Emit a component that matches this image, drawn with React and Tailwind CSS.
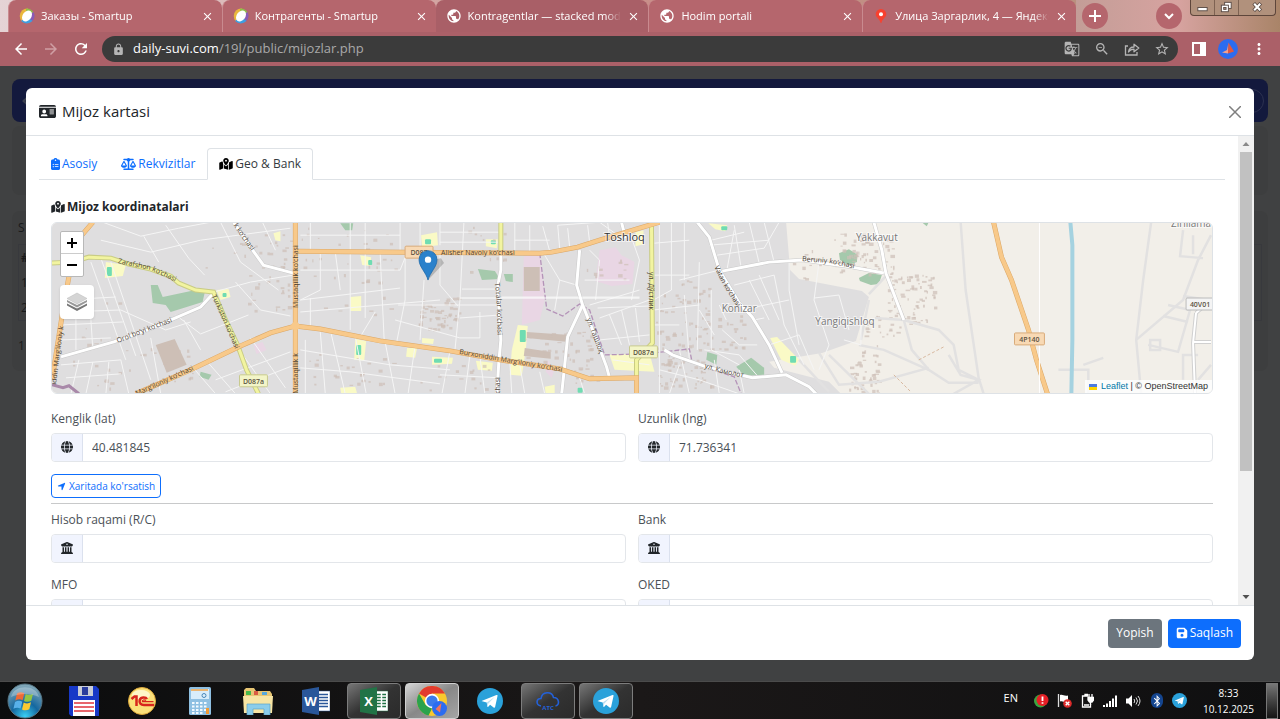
import { FaBluetoothB, FaBuildingColumns, FaClipboardList, FaFloppyDisk, FaGlobe, FaIdCard, FaLocationArrow, FaMapLocationDot, FaScaleBalanced } from 'react-icons/fa6'
import { MdArrowBack, MdArrowForward, MdClose, MdGTranslate, MdLock, MdMoreVert, MdPublic, MdRefresh, MdStarBorder, MdZoomOut } from 'react-icons/md'

const BROWSER_TABS = [
  { title: 'Заказы - Smartup', icon: 'smartup' },
  { title: 'Контрагенты - Smartup', icon: 'smartup' },
  { title: 'Kontragentlar — stacked moda', icon: 'globe', active: true },
  { title: 'Hodim portali', icon: 'globe' },
  { title: 'Улица Заргарлик, 4 — Яндекс', icon: 'pin' },
]

function Favicon({ type }) {
  if (type === 'globe') return <MdPublic className="size-4 shrink-0 text-white" />
  if (type === 'pin') {
    return (
      <svg viewBox="0 0 16 16" className="size-4 shrink-0">
        <path d="M8 1a5.3 5.3 0 0 0-5.3 5.3c0 3.4 4.2 4.400 4.900 8.700h.8c.7-4.300 4.900-5.300 4.900-8.700A5.300 5.300 0 0 0 8 1z" fill="#f8412f" />
        <circle cx="8" cy="6.300" r="2" fill="#fff" />
      </svg>
    )
  }
  return (
    <svg viewBox="0 0 16 16" className="size-4 shrink-0">
      <path d="M8 8 2.500 13A8 8 0 0 1 3 2.500 8 8 0 0 1 9 .5z" fill="#e9b73c" />
      <path d="M8 8 7 .6a8 8 0 0 1 7.500 4z" fill="#8dbf4b" />
      <path d="M8 8l6.500-4A8 8 0 0 1 13 13.500z" fill="#8a5bb5" />
      <path d="M8 8l5.500 5A8 8 0 0 1 2 13z" fill="#3f9ee0" />
      <ellipse cx="8" cy="8" rx="4.300" ry="6" fill="#fff" transform="rotate(38 8 8)" />
    </svg>
  )
}

function BrowserTab({ title, icon, active }) {
  return (
    <div
      className={`flex h-8 min-w-0 flex-1 items-center gap-[6px] rounded-t-lg pr-2 pl-[10px] ${
        active ? 'bg-[#a95f67]' : 'border-l border-[#c98a8f] bg-[#b5666d]'
      }`}
    >
      <Favicon type={icon} />
      <span className="min-w-0 flex-1 overflow-hidden mask-r-from-90% text-[11px] whitespace-nowrap text-white">{title}</span>
      <button aria-label="Yopish" className="text-white">
        <MdClose className="size-[13px]" />
      </button>
    </div>
  )
}

function TabStrip() {
  return (
    <div className="flex h-8 bg-linear-to-r from-[#e5d3d5] via-[#c98f8a] to-[#b29078] pl-2">
      <div className="flex w-[1068px] min-w-0">
        {BROWSER_TABS.map((tab) => (
          <BrowserTab key={tab.title} {...tab} />
        ))}
      </div>
      <div className="flex shrink-0 grow items-center justify-between bg-linear-to-r from-[#c39d97] via-[#d7a3a0] to-[#a98468] pl-[6px]">
        <button aria-label="Yangi" className="grid size-[26px] place-items-center rounded-full bg-[#b5666d] text-white">
          <svg viewBox="0 0 12 12" className="size-3" stroke="currentColor" strokeWidth="2">
            <path d="M6 0v12M0 6h12" />
          </svg>
        </button>
        <div className="flex items-center gap-2 self-stretch pr-1">
          <button aria-label="Qidirish" className="grid size-[26px] place-items-center rounded-full bg-[#b5666d] text-white">
            <svg viewBox="0 0 12 12" className="size-3" fill="none" stroke="currentColor" strokeWidth="2">
              <path d="M2 4l4 4 4-4" />
            </svg>
          </button>
          <div className="flex h-4 self-start rounded-b border border-t-0 border-[#5e463b] bg-[#b1917c] text-[#5b4c46]">
            <button aria-label="Kichraytirish" className="w-6 border-r border-[#7e6252]">
              <svg viewBox="0 0 24 16" className="h-full w-full">
                <rect x="7" y="8" width="10" height="3.500" fill="#fff" stroke="currentColor" />
              </svg>
            </button>
            <button aria-label="Oyna" className="w-6 border-r border-[#7e6252]">
              <svg viewBox="0 0 24 16" className="h-full w-full">
                <rect x="10" y="2.500" width="7" height="6.500" fill="#fff" stroke="currentColor" />
                <rect x="6.500" y="5.500" width="7.500" height="7" fill="#fff" stroke="currentColor" />
                <rect x="9" y="8" width="2.500" height="2" fill="#b1917c" stroke="currentColor" />
              </svg>
            </button>
            <button aria-label="Chiqish" className="w-9">
              <svg viewBox="0 0 36 16" className="h-full w-full">
                <path d="M14.500 3.500l7.500 8M22 3.500l-7.500 8" stroke="currentColor" strokeWidth="4" />
                <path d="M15 4l6.500 7M21.500 4L15 11" stroke="#fff" strokeWidth="2.200" />
              </svg>
            </button>
          </div>
        </div>
      </div>
    </div>
  )
}

function Toolbar() {
  return (
    <div className="flex h-[34px] items-center bg-[#ab6068] pr-3 pl-3 text-white">
      <button aria-label="Orqaga" className="mr-3"><MdArrowBack className="size-[18px]" /></button>
      <button aria-label="Oldinga" className="mr-3 text-[#cf9fa4]"><MdArrowForward className="size-[18px]" /></button>
      <button aria-label="Yangilash" className="mr-3"><MdRefresh className="size-[18px]" /></button>
      <div className="flex h-[26px] min-w-0 flex-1 items-center rounded-full bg-[#3b3b3b] pr-2 pl-[10px] text-[#b5b5b5]">
        <MdLock className="mr-2 size-[13px]" />
        <p className="flex-1 truncate text-[13px] text-[#a9a9a9]">
          <span className="text-white">daily-suvi.com</span>/19l/public/mijozlar.php
        </p>
        <div className="flex items-center gap-[14px]">
          <MdGTranslate className="size-4" />
          <MdZoomOut className="size-4" />
          <svg viewBox="0 0 16 16" className="size-4" fill="none" stroke="currentColor" strokeWidth="1.300">
            <path d="M4 5H1.500v9H13v-3" />
            <path d="M4.500 11c.4-3.200 2-5 5.500-5V3.200L14.800 7 10 10.800V8.200c-2.500 0-4.200.8-5.500 2.800z" strokeLinejoin="round" />
          </svg>
          <MdStarBorder className="size-4" />
        </div>
      </div>
      <div className="ml-[14px] flex items-center gap-3">
        <svg viewBox="0 0 14 14" className="size-[14px]">
          <path d="M0 0h14v14H0zM2 2v10h6V2z" fill="#fff" fillRule="evenodd" />
        </svg>
        <svg viewBox="0 0 20 20" className="size-5">
          <circle cx="10" cy="10" r="10" fill="#2c6cf0" />
          <path d="M10.500 3.500 9 11l-5 2.500 6 1z" fill="#f4a08d" />
          <path d="M10.500 3.500 10 14.500l6-2z" fill="#e4573f" />
        </svg>
        <MdMoreVert className="size-[18px]" />
      </div>
    </div>
  )
}

// Underlying page, only its edges stay visible round the dialog.
function DimmedPage() {
  return (
    <div className="h-full bg-[#404142] px-3 pt-[13px] text-[12px] text-[#191a1b]">
      <div className="flex h-[43px] items-center justify-between rounded-lg bg-[#13193d] pr-1 pl-3">
        <span className="size-2 rotate-45 border-b-2 border-l-2 border-[#3b3f4f]" />
        <span className="h-6 w-16 rounded-full border border-[#2c3150]" />
      </div>
      <div className="mt-1 h-[69px] rounded-lg bg-[#3d3e3f]" />
      <div className="mt-4 flex h-[160px] flex-col items-start rounded-lg bg-[#3d3e3f] px-[6px] leading-[25px]">
        <p className="mt-1">S</p>
        <div className="mt-1 self-stretch border border-[#38393d] px-[2px]">
          <p className="w-fit font-bold">#</p>
          <p className="w-fit">1</p>
          <p className="w-fit">2</p>
        </div>
        <p className="mt-3">1</p>
      </div>
    </div>
  )
}

const MAIN_ROADS = [
  'M295 222V394',
  'M295 251L405 252 540 253 552 252 578 247 600 240 640 228 660 222',
  'M135 394L190 370 240 346 270 333 295 326 320 329 380 341 450 351 500 360 560 369 590 379 637 378V394',
  'M92 222L80 236 70 265 62 310 55 355 51 380',
  'M995 222L1003 257 1013 280 1030 330 1038 360 1049 394',
]

const YELLOW_ROADS = [
  'M51 263L70 262 88 257 110 258 128 264 150 269 170 276 178 283 195 290 213 292 225 320 237 345 246 370 258 394',
  'M652 222L653 343 637 360V378',
  'M501 222V252',
]

const WHITE_ROADS = [
  'M501 252V270L498 285 501 340 499 362 497 394',
  'M580 250L577 285 583 305 568 337 562 394',
  'M583 305L595 335 607 367 610 378',
  'M698 222L710 237 720 270 740 303 753 317 770 345 783 373',
  'M723 271L770 262 803 260 853 267 885 273',
  'M875 222L883 250 887 273 905 320',
  'M665 350L673 355 707 367 753 378 787 375 810 387 817 394',
  'M213 293L200 307 147 330 113 342 60 357',
  'M233 222L250 247 263 265 293 273',
  'M622 222L626 238',
]

const STREETS = [
  'M102 222L140 236 178 228 210 222M100 240L150 252 200 240 290 228M143 236L158 262M165 225L188 258 204 275',
  'M90 262L125 360M100 258L135 356M110 262L150 380M60 300L115 297M62 312L120 310M60 325L122 322M60 340L110 338M75 300V350M88 290L92 350',
  'M60 365L120 360 128 394M65 378L120 374M70 394L78 360M85 394L92 362M105 394L108 362M120 310L165 330 190 322',
  'M150 338L160 394M183 320L200 350M190 365L215 394M205 360L235 394M235 345L270 394M250 338L285 388M215 380L290 352M225 392L292 366',
  'M213 292L250 282 293 275M235 282L260 310 290 316M175 315L200 334 248 315M220 222L240 262 278 290M262 222L275 250M300 235H400M310 222V250',
  'M300 270H400L406 255M320 252V290L300 300M335 252L340 290M350 222V330M365 222V318M380 253L384 340M300 300L400 288M300 312L440 300M310 298V326',
  'M405 255V300L396 345M440 255V285L458 306M424 280L420 340M464 222L460 300 455 350M400 222V252M420 222V252M440 232H500M440 242H498M440 222V245',
  'M398 305H498M460 318L500 315M395 320L460 338H480V312M375 312L360 337M330 330L345 394M355 336L366 394M385 342L395 394M415 346L408 394M450 351L442 394',
  'M300 350L390 365 450 370M300 368L350 372 440 384M305 340V394M320 332L325 394M470 355L465 394M480 357L485 394M440 375L500 378M510 362L512 394',
  'M515 253V222M530 253V225M550 251L543 226M515 240H550M560 248L558 225 600 222M570 247L568 228M590 242L588 225M610 236L608 222M462 289H498M502 297H640',
  'M590 250L600 260 596 300M585 280H630M600 222L625 240M630 232L640 260 632 300M545 255L560 280 555 310M560 280L577 285M590 305L640 290M600 318L650 300',
  'M598 308L650 306M610 315L622 345M622 310L630 345M636 308L640 342M600 340L650 335M613 360L650 365M540 372L545 394M520 365L525 394M580 378L585 394',
  'M660 225V394M672 222V290L654 300M685 222V280M655 275H690M655 243L690 240M680 280L720 270M685 295L690 360M700 262L698 350M654 310L700 305M712 290V350L740 365',
  'M712 240L745 232M718 255L765 248 780 222M735 225L742 268M750 222L760 263M765 222L775 262M710 245L770 240M728 268L735 230M723 330L740 345 758 345',
  'M735 285L775 275 785 325 805 365M750 280L770 320M760 275L780 320M742 310L790 300M755 320L765 318M770 345L800 335 815 370M790 262V290L800 345',
  'M820 262L815 300 830 345 820 370M815 298L840 295 850 330M840 320H862V345L845 340M700 310L715 335M680 350L690 394M715 360L720 394M740 370L745 394',
  'M660 370L700 380 740 394M670 394L680 365M705 350L740 355 760 378M727 320L720 305M655 325H680',
]

const RURAL_TRACKS = [
  'M962 222L967 290 980 378 985 394M950 355L962 375 980 380 955 394M905 320L940 330 955 345 960 370 980 380M905 320L913 350 930 370 950 383H980',
  'M1153 222L1145 280 1138 340 1143 394M1138 340L1185 300 1200 260 1213 235M1185 230L1182 256 1205 258M1195 235V254M1165 316L1190 322M1150 345L1180 352 1192 310 1170 305',
  'M1185 380V355H1200M1200 380L1213 365M1060 370H1090V394M1085 365L1105 358M1210 300L1185 296M1152 340H1162V350H1152z',
  'M860 345L885 350 930 370M870 300L862 340M820 353L840 385 880 382 930 368M830 355L870 394M870 294L888 275M800 360L830 392M876 318L905 320',
]

const PARKS = [
  '150,285 157,285 162,297 195,290 204,293 202,302 170,312 165,305 152,303',
  '340,223 353,223 352,230 345,230',
  '478,269 495,271 500,279 482,280',
  '504,274 513,274 513,282 506,281',
  '840,253 850,249 858,254 858,262 850,265 841,260',
  '860,278 870,273 883,275 880,284 872,285 861,281',
  '737,367 752,358 765,368 765,375 745,376',
  '708,352 718,355 717,365 707,360',
  '200,372 211,375 208,380 199,377',
  '923,222 930,222 928,226',
]

const YELLOW_AREAS = [
  '105,262 125,265 122,276 104,278',
  '216,290 228,289 230,297 220,300',
  '421,235 437,232 438,245 422,247',
  '486,239 498,239 497,248 486,246',
  '360,255 371,257 370,266 362,265',
  '350,297 361,296 361,311 350,311',
  '355,339 366,341 364,361 354,360',
  '407,348 417,348 415,358 406,357',
  '432,357 453,358 452,364 432,365',
  '476,361 493,363 492,371 478,370',
  '518,325 528,326 526,350 522,376 510,375 512,350',
  '422,338 434,339 433,344 422,343',
  '610,355 650,353 655,372 615,370',
  '771,338 778,337 800,360 796,366 782,360',
  '636,232 644,230 644,244 636,246',
  '709,223 728,225 726,231 716,229',
  '340,388 355,387 357,394 341,394',
  '545,387 555,385 555,394 546,394',
  '273,233 280,231 280,241 275,240',
]

const PITCHES = [
  [106, 267, 5, 9], [425, 239, 6, 5], [491, 240, 5, 4], [368, 260, 4, 5], [356, 345, 5, 10], [434, 359, 8, 4],
  [520, 330, 6, 12], [791, 356, 6, 7], [722, 226, 6, 4], [222, 293, 4, 4], [578, 388, 5, 5],
]

// [x, y, w, h, count] clusters of small houses
const HOUSE_CLUSTERS = [
  [205, 232, 85, 38, 26], [245, 275, 48, 36, 20], [60, 300, 60, 90, 24], [125, 345, 70, 40, 18],
  [300, 256, 95, 60, 26], [305, 352, 90, 38, 24], [418, 297, 42, 32, 60], [465, 225, 40, 50, 14],
  [300, 225, 95, 24, 12], [525, 332, 45, 30, 24], [570, 330, 28, 55, 26], [585, 255, 40, 35, 12],
  [655, 280, 55, 70, 60], [657, 355, 55, 36, 50], [700, 310, 50, 40, 26], [835, 232, 60, 42, 66],
  [888, 272, 48, 52, 80], [850, 345, 30, 48, 46], [790, 245, 30, 35, 12], [865, 315, 40, 22, 20], [400, 365, 90, 26, 16],
]

// Small deterministic generator so the houses stay put between renders.
function makeHouses() {
  let seed = 7
  const next = () => {
    seed = (seed * 16807) % 2147483647
    return seed / 2147483647
  }
  return HOUSE_CLUSTERS.flatMap(([x, y, w, h, count]) =>
    Array.from({ length: count }, () => [x + next() * w, y + next() * h, 1.2 + next() * 3.500, 1 + next() * 2.500]),
  )
}

const HOUSES = makeHouses()

const STREET_LABELS = [
  { id: 'zarafshon', d: 'M117 263L150 270 186 287', text: 'Zarafshon ko‘chasi' },
  { id: 'turkiston', d: 'M211 296L223 322 240 362', text: 'Turkiston ko‘chasi' },
  { id: 'orol', d: 'M117 343L145 332 185 317', text: 'Orol bo‘yi ko‘chasi' },
  { id: 'margilon', d: 'M136 396L165 383 206 364', text: 'Marg‘iloniy ko‘chasi' },
  { id: 'margilon2', d: 'M55 385L60 345 66 305', text: 'iddin Marg‘iloniy k' },
  { id: 'mustaqil', d: 'M298 308V238', text: 'Mustaqillik ko‘chasi' },
  { id: 'mustaqil2', d: 'M298 394V340', text: 'Mustaqillik k' },
  { id: 'navoiy', d: 'M441 255H530', text: 'Alisher Navoiy ko‘chasi' },
  { id: 'burxon', d: 'M459 354L510 363 575 374', text: 'Burxoniddin Marg‘iloniy ko‘chasi' },
  { id: 'toralar', d: 'M495 283L497 303 498 345', text: 'To‘ralar ko‘chasi' },
  { id: 'toralar2', d: 'M500 394V370', text: 'chasi' },
  { id: 'tashloq', d: 'M587 319L594 338 605 368', text: 'ул. Ташлоқ' },
  { id: 'dustlik', d: 'M650 272V315', text: 'ул. Дўстлик' },
  { id: 'vatan', d: 'M715 267L723 284 745 318', text: 'Vatan ko‘chasi' },
  { id: 'kamolot', d: 'M705 368L722 373 755 380', text: 'ул. Камолот' },
  { id: 'beruniy', d: 'M803 261L830 263 868 271', text: 'Beruniy ko‘chasi' },
  { id: 'other', d: 'M233 225L241 237 258 261', text: 'k ko‘chasi' },
]

const PLACES = [
  { x: 625, y: 241, name: 'Toshloq', className: 'fill-[#333] text-[11px]' },
  { x: 878, y: 241, name: 'Yakkavut', className: 'fill-[#777] text-[10px]' },
  { x: 740, y: 312, name: 'Konizar', className: 'fill-[#777] text-[10px]' },
  { x: 846, y: 325, name: 'Yangiqishloq', className: 'fill-[#777] text-[10px]' },
  { x: 1193, y: 227, name: 'Zirillama', className: 'fill-[#777] text-[10px]' },
]

const SHIELDS = [
  { x: 239, y: 375, w: 28, text: 'D087a', fill: '#f3f5c8', stroke: '#c8ca8f' },
  { x: 405, y: 246, w: 28, text: 'D087', fill: '#f8d9b4', stroke: '#d9ab79' },
  { x: 630, y: 346, w: 28, text: 'D087a', fill: '#f3f5c8', stroke: '#c8ca8f' },
  { x: 1016, y: 333, w: 30, text: '4P140', fill: '#f8d9b4', stroke: '#d9ab79' },
  { x: 1188, y: 298, w: 28, text: '40V01', fill: '#f4f4f4', stroke: '#bbb' },
]

function MapTiles() {
  return (
    <svg viewBox="51 222 1163 172" preserveAspectRatio="xMidYMid slice" className="block h-full w-full" fill="none">
      <rect x="51" y="222" width="1163" height="172" fill="#f2efe9" />
      <path d="M51 222H787L791 270 800 279 863 291 870 297 857 341 823 353 770 362 775 368 830 382 842 394H51z" fill="#dfdedf" />
      <path d="M524 256L540 254 545 300 540 320 522 325zM600 250L616 247 622 255 635 262 633 284 612 286 596 281z" fill="#e9d6e4" />
      <path d="M253 345L262 342 266 350 256 354zM548 360L554 372 552 378 546 372z" fill="#e9d6e4" />
      {PARKS.map((p) => <polygon key={p} points={p} fill="#a5c9ac" />)}
      {YELLOW_AREAS.map((p) => <polygon key={p} points={p} fill="#fafac6" />)}
      {PITCHES.map(([x, y, w, h]) => <rect key={`${x}-${y}`} x={x} y={y} width={w} height={h} rx="1" fill="#6fdcb2" />)}
      <g fill="#cdbfb6">
        <path d="M155 345L174 339 186 365 166 373z" />
        <path d="M524 267H540V291H524zM525 348L551 352V359L524 356zM527 332L570 335 569 342 527 338z" />
        {HOUSES.map(([x, y, w, h]) => <rect key={`${x}-${y}`} x={x} y={y} width={w} height={h} opacity="0.7" />)}
      </g>
      <g stroke="#e2e1e1" strokeWidth="2.500">{RURAL_TRACKS.map((d) => <path key={d} d={d} />)}</g>
      <g stroke="#f5f5f5" strokeWidth="1">{STREETS.map((d) => <path key={d} d={d} />)}</g>
      <path d="M540 253L547 309 563 316 580 304 590 310 605 355 645 354 690 349 693 363 735 377 742 394" stroke="#b493b8" strokeWidth="1.300" strokeDasharray="5 2" />
      <path d="M51 385L62 388 68 386 78 394" stroke="#a989a9" strokeWidth="3" />
      <path d="M920 360L945 347M895 375L912 392" stroke="#d8b9a0" strokeDasharray="3 2" />
      <g stroke="#c9c9c9" strokeWidth="4">{WHITE_ROADS.map((d) => <path key={d} d={d} />)}</g>
      <g stroke="#fff" strokeWidth="3">{WHITE_ROADS.map((d) => <path key={d} d={d} />)}</g>
      <path d="M1198 313L1195 343 1197 394M1198 313L1213 300M1196 342H1213" stroke="#d0d0d0" strokeWidth="4" />
      <path d="M1198 313L1195 343 1197 394M1198 313L1213 300M1196 342H1213" stroke="#fff" strokeWidth="2" />
      <path d="M1072 222L1074 245V340L1073 394" stroke="#a5d2e0" strokeWidth="4" />
      <g stroke="#c9cc84" strokeWidth="5">{YELLOW_ROADS.map((d) => <path key={d} d={d} />)}</g>
      <g stroke="#f2f4a0" strokeWidth="3">{YELLOW_ROADS.map((d) => <path key={d} d={d} />)}</g>
      <g stroke="#dba766" strokeWidth="5">{MAIN_ROADS.map((d) => <path key={d} d={d} />)}</g>
      <g stroke="#f8c98a" strokeWidth="4">{MAIN_ROADS.map((d) => <path key={d} d={d} />)}</g>
      <circle cx="295" cy="326" r="4" fill="#f8c98a" />
      <path d="M460 298H640M1041 222V394" stroke="#fff" />
      {STREET_LABELS.map(({ id, d, text }) => (
        <g key={id}>
          <path id={id} d={d} />
          <text className="fill-[#4d4335] text-[7px]"><textPath href={`#${id}`}>{text}</textPath></text>
        </g>
      ))}
      {SHIELDS.map(({ x, y, w, text, fill, stroke }) => (
        <g key={`${text}-${x}`}>
          <rect x={x} y={y} width={w} height="12" rx="1" fill={fill} stroke={stroke} />
          <text x={x + w / 2} y={y + 9} textAnchor="middle" className="fill-[#5c5342] text-[7px] font-semibold">{text}</text>
        </g>
      ))}
      {PLACES.map(({ x, y, name, className }) => (
        <text key={name} x={x} y={y} textAnchor="middle" stroke="#fff" strokeOpacity="0.6" strokeWidth="2" paintOrder="stroke" className={className}>
          {name}
        </text>
      ))}
      <path d="M429 279L444 263 441 258 432 260z" fill="#555" opacity="0.3" />
      <path d="M428 280C426 272 419 267 419 259.500a9 9 0 0 1 18 0C437 267 430 272 428 280z" fill="#2a81cb" stroke="#1f6aa9" strokeWidth="0.800" />
      <circle cx="428" cy="259.500" r="3.200" fill="#fff" />
    </svg>
  )
}

function LocationMap() {
  return (
    <div className="relative h-[172px] overflow-hidden rounded-md border border-[#dee2e6]">
      <MapTiles />
      <div className="absolute top-2 left-2 flex flex-col gap-2">
        <div className="w-6 rounded-xs border border-[#b8b8b8] bg-white text-black">
          <button aria-label="Zoom in" className="grid h-[22px] w-full place-items-center border-b border-[#ccc]">
            <svg viewBox="0 0 10 10" className="size-[10px]" stroke="currentColor" strokeWidth="2"><path d="M5 0v10M0 5h10" /></svg>
          </button>
          <button aria-label="Zoom out" className="grid h-[22px] w-full place-items-center">
            <svg viewBox="0 0 10 10" className="size-[10px]" stroke="currentColor" strokeWidth="2"><path d="M0 5h10" /></svg>
          </button>
        </div>
        <button aria-label="Layers" className="grid size-[34px] place-items-center rounded bg-white shadow">
          <svg viewBox="0 0 22 20" className="h-5 w-[22px]">
            <path d="M11 19L1 13.500v-2l10 5 10-5v2z" fill="#777" />
            <path d="M11 15.500L1 10v-2l10 5 10-5v2z" fill="#999" />
            <path d="M11 1l10 5.500L11 12 1 6.500z" fill="#d5d5d5" stroke="#bbb" strokeWidth="0.500" />
          </svg>
        </button>
      </div>
      <div className="absolute right-0 bottom-0 flex items-center gap-1 bg-white/80 px-1 font-[Liberation_Sans] text-[9px] leading-[13px] text-[#333]">
        <svg viewBox="0 0 8 6" className="h-[6px] w-2">
          <path d="M0 0h8v3H0z" fill="#4c7be1" />
          <path d="M0 3h8v3H0z" fill="#ffd500" />
        </svg>
        <span><a href="#leaflet" className="text-[#0078a8]">Leaflet</a> | © OpenStreetMap</span>
      </div>
    </div>
  )
}

function Field({ id, label, icon: Icon, value = '' }) {
  return (
    <div>
      <label htmlFor={id} className="block w-fit text-[12px] leading-5 text-[#4b5157]">{label}</label>
      <div className="mt-1 flex h-[29px] overflow-hidden rounded border border-[#e3e6ea]">
        <span className="grid w-[31px] place-items-center border-r border-[#dbe1ee] bg-[#f1f4fe] text-[#212529]">
          <Icon className="mb-[2px] size-3" />
        </span>
        <input id={id} defaultValue={value} className="min-w-0 flex-1 px-[9px] text-[12px] text-[#495057] outline-none" />
      </div>
    </div>
  )
}

const CARD_TABS = [
  { label: 'Asosiy', icon: FaClipboardList, iconClass: 'h-3 w-[9px]' },
  { label: 'Rekvizitlar', icon: FaScaleBalanced, iconClass: 'h-3 w-[15px]' },
  { label: 'Geo & Bank', icon: FaMapLocationDot, iconClass: 'h-3 w-[14px] text-black', active: true },
]

function CardTabs() {
  return (
    <div className="flex border-b border-[#dee2e6]">
      {CARD_TABS.map(({ label, icon: Icon, iconClass, active }) => (
        <button
          key={label}
          className={`-mb-px flex h-8 items-center gap-[2px] rounded-t border px-[11px] text-[12px] ${
            active ? 'border-[#dee2e6] border-b-white bg-white text-[#343a40]' : 'border-transparent text-[#0d6efd]'
          }`}
        >
          <Icon className={iconClass} />
          {label}
        </button>
      ))}
    </div>
  )
}

function Scrollbar() {
  return (
    <div className="flex w-4 shrink-0 flex-col items-center bg-[#f1f1f1]">
      <svg viewBox="0 0 16 16" className="size-4 shrink-0"><path d="M4.500 10h7L8 6z" fill="#8a8a8a" /></svg>
      <div className="h-[68%] w-3 bg-[#c1c1c1]" />
      <svg viewBox="0 0 16 16" className="mt-auto size-4 shrink-0"><path d="M4.500 6h7L8 10z" fill="#505050" /></svg>
    </div>
  )
}

function ClientModal() {
  return (
    <section role="dialog" aria-label="Mijoz kartasi" className="flex h-full flex-col overflow-hidden rounded-md bg-white">
      <header className="flex h-12 shrink-0 items-center border-b border-[#dee2e6] px-[13px] text-[#212529]">
        <FaIdCard className="mr-[6px] size-[17px]" />
        <h1 className="flex-1 text-[15px]">Mijoz kartasi</h1>
        <button aria-label="Yopish" className="text-[#7f7f7f]">
          <svg viewBox="0 0 12 12" className="size-3" stroke="currentColor" strokeWidth="1.500"><path d="M0 0l12 12M12 0L0 12" /></svg>
        </button>
      </header>
      <div className="flex min-h-0 flex-1">
        <div className="min-w-0 flex-1 overflow-hidden px-[13px] pt-3">
          <CardTabs />
          <div className="px-3 pt-4">
            <h2 className="flex items-center gap-[2px] pb-1 text-[12px] leading-[22px] font-bold text-[#212529]">
              <FaMapLocationDot className="h-3 w-[14px]" />
              Mijoz koordinatalari
            </h2>
            <LocationMap />
            <div className="mt-[15px] grid grid-cols-2 gap-x-3">
              <Field id="lat" label="Kenglik (lat)" icon={FaGlobe} value="40.481845" />
              <Field id="lng" label="Uzunlik (lng)" icon={FaGlobe} value="71.736341" />
            </div>
            <button className="mt-3 flex h-6 items-center gap-[3px] rounded-sm border border-[#0d6efd] px-[5px] text-[10px] text-[#0d6efd]">
              <FaLocationArrow className="size-[9px]" />
              Xaritada ko'rsatish
            </button>
            <hr className="mt-[5px] border-[#c8c9ca]" />
            <div className="mt-[6px] grid grid-cols-2 gap-x-3 gap-y-3">
              <Field id="account" label="Hisob raqami (R/C)" icon={FaBuildingColumns} />
              <Field id="bank" label="Bank" icon={FaBuildingColumns} />
              <Field id="mfo" label="MFO" icon={FaBuildingColumns} />
              <Field id="oked" label="OKED" icon={FaBuildingColumns} />
            </div>
          </div>
        </div>
        <Scrollbar />
      </div>
      <footer className="flex h-[55px] shrink-0 items-center justify-end gap-[6px] border-t border-[#dee2e6] px-[13px] text-[12px] text-white">
        <button className="h-[29px] rounded bg-[#6c757d] px-2">Yopish</button>
        <button className="flex h-[29px] items-center gap-[2px] rounded bg-[#0d6efd] px-2">
          <FaFloppyDisk className="size-3" />
          Saqlash
        </button>
      </footer>
    </section>
  )
}

function TelegramIcon({ className }) {
  return (
    <svg viewBox="0 0 28 28" className={className}>
      <circle cx="14" cy="14" r="14" fill="#2aa1da" />
      <path d="M5.500 13.800L21 7.500c.8-.3 1.300.2 1.100 1.100l-2.600 11.800c-.2.900-.9 1.100-1.600.6l-3.800-2.900-2 2c-.4.400-.8.300-.9-.3l-.7-4.200-4.900-1.300c-.6-.1-.6-.3-.1-.5z" fill="#fff" />
      <path d="M10.500 15.600l8.500-5.800-6.800 7-.9 3.400z" fill="#bcdff2" />
    </svg>
  )
}

function StartOrb() {
  return (
    <svg viewBox="0 0 36 36" className="size-9">
      <defs>
        <radialGradient id="orb" cx="0.5" cy="0.95" r="0.9">
          <stop offset="0" stopColor="#39d0f5" />
          <stop offset="0.45" stopColor="#14679f" />
          <stop offset="1" stopColor="#7fa6b8" />
        </radialGradient>
      </defs>
      <circle cx="18" cy="18" r="17" fill="url(#orb)" stroke="#587887" />
      <path d="M10 10.500c2.500-1.700 5-1.600 7.300-.3l-1.700 7c-2.300-1.200-4.700-1.200-7.300.3z" fill="#ee6a35" />
      <path d="M18.700 11c2.400 1.200 4.800 1.200 7.300-.3l-1.700 7c-2.500 1.400-5 1.400-7.300.2z" fill="#93c544" />
      <path d="M8 19c2.600-1.500 5-1.500 7.300-.3l-1.700 6.800c-2.300-1.200-4.700-1.200-7.200.3z" fill="#58b1ea" />
      <path d="M16.700 19.500c2.300 1.200 4.700 1.200 7.300-.2l-1.700 6.900c-2.500 1.500-4.900 1.500-7.300.2z" fill="#fbc931" />
      <path d="M4 14C7 1 29 1 32 14c-9-4-19-4-28 0z" fill="#fff" opacity="0.28" />
    </svg>
  )
}

function FloppyIcon() {
  return (
    <svg viewBox="0 0 30 30" className="size-[30px]">
      <path d="M0 0h27l3 3v27H2l-2-2z" fill="#1738c7" />
      <path d="M9 0h15v10H9z" fill="#c8ccd6" /><path d="M13 1h6v8h-6z" fill="#2a3c9c" />
      <path d="M4 14h22v16H4z" fill="#fff" />
      <path d="M5 17h20M5 21h20M5 25h20" stroke="#e0343c" strokeWidth="1.500" />
    </svg>
  )
}

function OneCIcon() {
  return (
    <svg viewBox="0 0 28 28" className="size-7">
      <circle cx="14" cy="14" r="13.500" fill="#fbe07a" stroke="#dca73a" />
      <ellipse cx="13" cy="8" rx="9" ry="5" fill="#fff6c8" />
      <path d="M3.500 12l3-2.500h2V19" stroke="#d8251d" strokeWidth="2.500" fill="none" />
      <path d="M19 12c-1-2-6-2.500-7.200.8C10.800 16 13 18 16 18h10" stroke="#d8251d" strokeWidth="2.500" fill="none" />
      <path d="M18 13.500c-2-1.500-4-.3-3.500 1.200h11" stroke="#d8251d" strokeWidth="1.300" fill="none" />
    </svg>
  )
}

function CalculatorIcon() {
  return (
    <svg viewBox="0 0 22 28" className="h-7 w-[22px]">
      <rect width="22" height="28" rx="1.500" fill="#8fc0e2" />
      <rect x="2" y="2" width="18" height="10" fill="#d9edfa" />
      <path d="M2 3h17" stroke="#f1a245" strokeWidth="1.500" />
      <circle cx="15" cy="8.500" r="2" fill="none" stroke="#4887b9" />
      <path d="M3 16h16M3 19.500h16M3 23h16M3 26h12" stroke="#f3faff" strokeWidth="2.200" strokeDasharray="2.500 1.500" />
      <rect x="17" y="21" width="3" height="6" fill="#f29b35" />
    </svg>
  )
}

function ExplorerIcon() {
  return (
    <svg viewBox="0 0 30 28" className="h-7 w-[30px]">
      <path d="M1 3l2-2h8l2 3h14l2 3v19H1z" fill="#e7c674" />
      <path d="M3 4h5v4H3z" fill="#48b84c" /><path d="M11 4h4v4h-4z" fill="#d95c43" /><path d="M19 5h5v3h-5z" fill="#56a8dc" />
      <path d="M0 9h30l-1 17H1z" fill="#f7e5a4" />
      <path d="M4 28V17h23v11h-6v-6H10v6z" fill="#8bcdeb" stroke="#5ba3c7" strokeWidth="0.700" />
    </svg>
  )
}

function OfficeIcon({ letter, color, grid }) {
  return (
    <svg viewBox="0 0 28 28" className="size-7">
      <path d="M14 4h14v20H14z" fill="#fff" stroke={color} strokeWidth="0.500" />
      <path d="M17 7.500h9M17 10.500h9M17 13.500h9M17 16.500h9M17 19.500h9" stroke={color} strokeWidth="1.300" />
      {grid && <path d="M21.500 5v18" stroke="#fff" strokeWidth="1.500" />}
      <path d="M0 3L17 0v28L0 25z" fill={color} />
      <text x="8.500" y="18.500" textAnchor="middle" className="fill-white text-[13px] font-bold">{letter}</text>
    </svg>
  )
}

function ChromeIcon() {
  return (
    <svg viewBox="0 0 30 30" className="size-[30px]">
      <circle cx="15" cy="15" r="15" fill="#f9c92e" />
      <path d="M15 15L2 7.500A15 15 0 0 1 28 7.500H15z" fill="#e33b2e" />
      <path d="M2 7.500l6.500 11.300L15 22.500 11.500 29.600A15 15 0 0 1 2 7.500z" fill="#2ba24c" />
      <circle cx="15" cy="15" r="7.200" fill="#fff" />
      <circle cx="15" cy="15" r="5.600" fill="#3c7bea" />
      <circle cx="22.500" cy="22.500" r="7.500" fill="#2c6cf0" />
      <path d="M24.500 17l-6 6 4.500 3.500z" fill="#f0745c" />
    </svg>
  )
}

function AtcIcon() {
  return (
    <svg viewBox="0 0 24 20" className="h-5 w-6" fill="none" stroke="#2461d8" strokeWidth="1.600">
      <path d="M5 15C-.5 14 0 7.500 5 7.500 6 0 16 0 17.500 6.500c6 0 6.500 8 2 8.500" />
      <text x="12" y="18.500" textAnchor="middle" className="fill-[#2461d8] stroke-none text-[6px] font-bold">ATC</text>
    </svg>
  )
}

const TASKBAR_ITEMS = [
  { name: 'Total Commander', icon: <FloppyIcon /> },
  { name: '1C', icon: <OneCIcon /> },
  { name: 'Calculator', icon: <CalculatorIcon /> },
  { name: 'Explorer', icon: <ExplorerIcon /> },
  { name: 'Word', icon: <OfficeIcon letter="W" color="#2a579a" /> },
  { name: 'Excel', icon: <OfficeIcon letter="X" color="#217346" grid />, state: 'open' },
  { name: 'Chrome', icon: <ChromeIcon />, state: 'focused' },
  { name: 'Telegram', icon: <TelegramIcon className="size-[26px]" /> },
  { name: 'ATC', icon: <AtcIcon />, state: 'open' },
  { name: 'Telegram 2', icon: <TelegramIcon className="size-[26px]" />, state: 'open' },
]

const ITEM_STATES = {
  open: 'border-[#7d7d7d] bg-linear-to-br from-[#777] via-[#333] to-[#2b2b2b]',
  focused: 'border-[#d0d0d0] bg-linear-to-br from-[#d5d5d5] via-[#888] to-[#a5a5a5]',
}

function Tray() {
  return (
    <div className="flex items-center text-white">
      <span className="mr-3 mb-1 text-[11px]">EN</span>
      <div className="grid auto-cols-[23px] grid-flow-col place-items-center">
        <svg viewBox="0 0 15 15" className="size-[15px]">
          <circle cx="6.500" cy="8" r="6.500" fill="#3aa540" />
          <circle cx="8.500" cy="7" r="6" fill="#e51e25" />
          <path d="M8.500 3.500v4.500M8.500 9.200v1.600" stroke="#fff" strokeWidth="1.800" />
        </svg>
        <svg viewBox="0 0 15 15" className="size-[15px]">
          <path d="M1.500 1v13" stroke="#ddd" strokeWidth="1.300" />
          <path d="M3 2c3-1 4 1.500 8 .5V9c-4 1-5-1.500-8-.5z" fill="#fff" />
          <circle cx="10.500" cy="10.500" r="4.300" fill="#dd2b2b" />
          <path d="M8.700 8.700l3.600 3.600M12.300 8.700l-3.600 3.600" stroke="#fff" strokeWidth="1.400" />
        </svg>
        <svg viewBox="0 0 13 15" className="h-[15px] w-[13px]" fill="none" stroke="#fff" strokeWidth="1.300">
          <path d="M7 3H1.500v11h8V11M4 3V1.500h3M3 12h5" />
          <path d="M8 1v3M11 1v3M9.500 9v3" />
          <path d="M7 4.500h5.500V7L11 9H8.500L7 7z" fill="#fff" />
        </svg>
        <svg viewBox="0 0 15 12" className="h-3 w-[15px]" fill="#fff">
          <path d="M0 10h2v2H0zM3 8.500h2V12H3zM6 6h2v6H6zM9 3.500h2V12H9zM12 .5h2V12h-2z" />
        </svg>
        <svg viewBox="0 0 15 14" className="h-[14px] w-[15px]" fill="none" stroke="#ddd">
          <path d="M0 4.500h2.500L6 1v12L2.500 9.500H0z" fill="#fff" stroke="none" />
          <path d="M8 5q1.500 2 0 4M10 3.500q3 3.500 0 7M12 2q4 5 0 10" />
        </svg>
        <span className="grid h-[15px] w-3 place-items-center rounded-full bg-[#14458f]"><FaBluetoothB className="h-3 w-auto" /></span>
        <TelegramIcon className="size-[15px]" />
      </div>
      <div className="ml-3 text-center text-[10px] leading-4">
        <p>8:33</p>
        <p>10.12.2025</p>
      </div>
      <div className="mr-[2px] ml-3 h-9 w-3 border border-[#777] bg-linear-to-b from-[#777] to-[#151515]" />
    </div>
  )
}

function Taskbar() {
  return (
    <footer className="flex h-[38px] shrink-0 items-center justify-between overflow-hidden border-t border-[#4b4b4b] bg-linear-to-r from-[#0b0c0d] via-[#1b1818] to-[#0f0f10]">
      <div className="flex items-center">
        <button aria-label="Start" className="flex w-[55px] pl-[7px]"><StartOrb /></button>
        {TASKBAR_ITEMS.map(({ name, icon, state }) => (
          <button
            key={name}
            aria-label={name}
            className={`mx-[2px] grid h-9 w-[54px] place-items-center rounded-sm border ${state ? ITEM_STATES[state] : 'border-transparent'}`}
          >
            {icon}
          </button>
        ))}
      </div>
      <Tray />
    </footer>
  )
}

export default function App() {
  return (
    <div className="flex h-screen flex-col overflow-hidden font-['Open_Sans','Noto_Sans',sans-serif]">
      <TabStrip />
      <Toolbar />
      <main className="relative min-h-0 flex-1">
        <DimmedPage />
        <div className="absolute inset-0 px-[26px] pt-[22px] pb-[21px]">
          <ClientModal />
        </div>
      </main>
      <Taskbar />
    </div>
  )
}
